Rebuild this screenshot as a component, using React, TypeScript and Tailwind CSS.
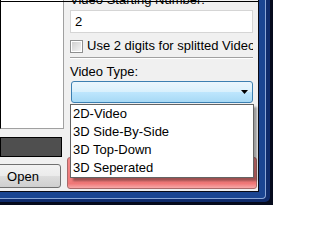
export default function App() {
  const font = "font-['Liberation_Sans',Arial,sans-serif]";
  return (
    <div className={`w-[273px] h-[205px] bg-[#060b1c] overflow-hidden ${font} text-[13px] text-black`}>
      <div className="w-[270px] h-[202px] bg-[#0f2b6b] rounded-br-[5px]">
        <div className="w-[266px] h-[199px] bg-[#1a4592] border-r border-b border-[#8aa6d6] rounded-br-[4px]">
          <div className="w-[259px] h-[192px] border-r border-b border-[#0a0a14]">
            <div className="relative w-[258px] h-[191px] bg-[#f0f0f0] overflow-hidden flex">
              {/* left column */}
              <div className="w-[64px] flex flex-col shrink-0">
                <div className="h-[129px] w-[64px] bg-white border-l border-l-black border-r border-b border-r-[#a0a0a0] border-b-[#a0a0a0]" />
                <div className="mt-[8px] h-[20px] w-[62px] border border-black bg-[#4f4f4f]" />
                <div className="mt-[7px] h-[24px] w-[76px] -ml-[15px] rounded-[3px] border border-[#707070] bg-[linear-gradient(#f2f2f2,#ebebeb_50%,#dddddd_50%,#cfcfcf)] flex items-center justify-center leading-none">
                  Open
                </div>
              </div>
              {/* content column */}
              <div className="ml-[6px] w-[183px] flex flex-col shrink-0">
                <div className="-mt-[8px] h-[16px] leading-[16px] whitespace-nowrap">Video Starting Number:</div>
                <div className="mt-[2px] h-[23px] bg-white border border-[#d5d5d5] flex items-center pl-[4px]">2</div>
                <div className="mt-[5px] h-[16px] -mb-[3px] flex items-center gap-[4px] whitespace-nowrap overflow-hidden">
                  <div className="w-[13px] h-[13px] shrink-0 border border-[#8e8f8f] bg-white p-[1px]">
                    <div className="w-full h-full bg-[linear-gradient(135deg,#d0d0d0,#f4f4f4)]" />
                  </div>
                  <span className="leading-[16px]">Use 2 digits for splitted Video</span>
                </div>
                <div className="mt-[6px] h-[2px] border-t border-[#a0a0a0] border-b border-b-white" />
                <div className="mt-[5px] h-[16px] leading-[16px] whitespace-nowrap">Video Type:</div>
                <div className="mt-[1px] ml-[1px] h-[22px] rounded-[3px] border border-[#3c7fb1] bg-[linear-gradient(#eaf6fd,#d9f0fc_50%,#bee6fd_50%,#a7d9f5)] flex items-center justify-end pr-[4px]">
                  <svg width="7" height="4" viewBox="0 0 7 4"><path d="M0 0h7L3.5 4z" fill="#000" /></svg>
                </div>
                <div className="mt-[54px] -ml-[3px] w-[190px] h-[32px] shrink-0 rounded-[3px] border border-[#a86a6a] bg-[linear-gradient(#f48a8a,#f07878_85%,#f6a8a8)]" />
              </div>
              {/* dropdown list */}
              <div className="absolute left-[70px] top-[104px] w-[184px] h-[74px] bg-white border border-[#646464] shadow-[3px_3px_2px_rgba(0,0,0,0.35)]">
                <div className="h-[18px] leading-[18px] pl-[2px]">2D-Video</div>
                <div className="h-[18px] leading-[18px] pl-[2px]">3D Side-By-Side</div>
                <div className="h-[18px] leading-[18px] pl-[2px]">3D Top-Down</div>
                <div className="h-[18px] leading-[18px] pl-[2px]">3D Seperated</div>
              </div>
              <div className="absolute left-0 top-[1px] w-full h-[1px] bg-black" />
            </div>
          </div>
        </div>
      </div>
    </div>
  );
}
